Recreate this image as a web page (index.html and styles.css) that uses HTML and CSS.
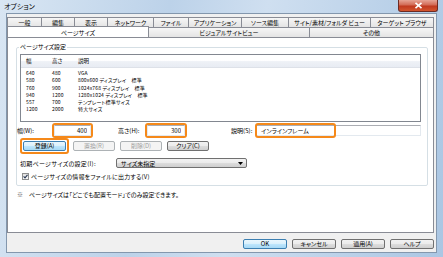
FILE: index.html
```html
<!DOCTYPE html>
<html lang="ja">
<head>
  <meta charset="UTF-8">
  <title>オプション</title>
  <link rel="stylesheet" href="styles.css">
</head>
<body>

<div class="window">
  <div class="titlebar">
    <span class="title">オプション</span>
    <span class="close-btn">
      <svg width="9" height="7" viewBox="0 0 9 7"><path d="M1.5 0.8 L7.5 6.2 M7.5 0.8 L1.5 6.2" stroke="#fff" stroke-width="1.6"/></svg>
    </span>
  </div>

  <div class="client">
    <div class="tab-row">
      <span class="tab tab-general">一般</span>
      <span class="tab tab-edit">編集</span>
      <span class="tab tab-view">表示</span>
      <span class="tab tab-network">ネットワーク</span>
      <span class="tab tab-file">ファイル</span>
      <span class="tab tab-app">アプリケーション</span>
      <span class="tab tab-source">ソース編集</span>
      <span class="tab tab-site">サイト/素材/フォルダ ビュー</span>
      <span class="tab tab-target">ターゲット ブラウザ</span>
    </div>
    <div class="tab-row">
      <span class="tab tab-active tab-pagesize">ページサイズ</span>
      <span class="tab tab-visual">ビジュアルサイトビュー</span>
      <span class="tab tab-other">その他</span>
    </div>

    <div class="panel">
      <fieldset class="group">
        <legend>ページサイズ設定</legend>

        <div class="listbox">
          <div class="list-head">
            <span>幅</span><span>高さ</span><span>説明</span>
          </div>
          <div class="list-row"><span>640</span><span>480</span><span>VGA</span></div>
          <div class="list-row"><span>580</span><span>600</span><span>800x600 ディスプレイ　標準</span></div>
          <div class="list-row"><span>760</span><span>900</span><span>1024x768 ディスプレイ　標準</span></div>
          <div class="list-row"><span>940</span><span>1200</span><span>1280x1024 ディスプレイ　標準</span></div>
          <div class="list-row"><span>557</span><span>700</span><span>テンプレート標準サイズ</span></div>
          <div class="list-row"><span>1200</span><span>2000</span><span>特大サイズ</span></div>
        </div>

        <div class="size-row">
          <label class="lbl-width" for="w">幅(<u>W</u>):</label>
          <span class="ring ring-width"><input class="textbox num" id="w" value="400"></span>
          <label class="lbl-height" for="h">高さ(<u>H</u>):</label>
          <span class="ring ring-height"><input class="textbox num" id="h" value="300"></span>
          <label class="lbl-desc" for="d">説明(<u>S</u>):</label>
          <span class="desc-wrap">
            <input class="textbox desc" id="d" value="インラインフレーム">
            <span class="ring-mark"></span>
          </span>
        </div>

        <div class="btn-row">
          <span class="ring ring-btn"><button class="btn btn-default">登録(<u>A</u>)</button></span>
          <button class="btn btn-disabled">置換(<u>R</u>)</button>
          <button class="btn btn-disabled">削除(<u>D</u>)</button>
          <button class="btn">クリア(<u>C</u>)</button>
        </div>

        <div class="select-row">
          <span class="select-label">初期ページサイズの設定(<u>I</u>):</span>
          <span class="select">
            <span>サイズ未指定</span>
            <svg width="5" height="3" viewBox="0 0 5 3"><path d="M0 0 H5 L2.5 3 Z" fill="#000"/></svg>
          </span>
        </div>

        <div class="check-row">
          <span class="checkbox">
            <svg width="5" height="5" viewBox="0 0 5 5"><path d="M0.6 2.4 L2 3.9 L4.5 0.8" stroke="#2b3a55" stroke-width="1.1" fill="none"/></svg>
          </span>
          <span>ページサイズの情報をファイルに出力する(<u>V</u>)</span>
        </div>
      </fieldset>

      <p class="note"><span class="mark">※</span>　ページサイズは「どこでも配置モード」でのみ設定できます。</p>
    </div>

    <div class="footer">
      <button class="btn btn-default">OK</button>
      <button class="btn">キャンセル</button>
      <button class="btn">適用(<u>A</u>)</button>
      <button class="btn">ヘルプ</button>
    </div>
  </div>
</div>

</body>
</html>
```

FILE: styles.css
```css
* {
  box-sizing: border-box;
}

body {
  margin: 0;
  font-family: "Noto Sans CJK JP", "Noto Sans", sans-serif;
  font-size: 6px;
  color: #000;
  font-feature-settings: "palt";
}

u {
  text-decoration: none;
}

.window {
  width: 443px;
  height: 257px;
  padding-bottom: 4px;
  background: linear-gradient(100deg, #d9e6f3 0%, #bcd2e9 35%, #cfdff0 55%, #aac6e3 100%);
}

.titlebar {
  display: flex;
  height: 13px;
  padding: 0 5px 0 4px;
}

.title {
  font-size: 7px;
  line-height: 13px;
}

.close-btn {
  display: flex;
  align-items: center;
  justify-content: center;
  margin-left: auto;
  width: 40px;
  height: 12px;
  border: 1px solid #6d2b23;
  border-top: none;
  border-radius: 0 0 3px 3px;
  background: linear-gradient(#e6a495 0%, #d26a55 45%, #c0391f 55%, #d2552f 100%);
}

.client {
  margin: 0 6px;
  height: 240px;
  padding: 3px 2px 3px 0;
  background: #f0f0f0;
  border: 1px solid #8397ad;
}

.tab-row {
  display: flex;
  height: 10px;
}

.tab {
  height: 10px;
  line-height: 9px;
  text-align: center;
  white-space: nowrap;
  border: 1px solid #898c95;
  border-bottom: none;
  margin-left: -1px;
  background: linear-gradient(#f6f6f6, #e4e4e4);
}

.tab:first-child {
  margin-left: 0;
}

.tab-general { width: 35px; }
.tab-edit { width: 34px; }
.tab-view { width: 34px; }
.tab-network { width: 47px; }
.tab-file { width: 36px; }
.tab-app { width: 54px; }
.tab-source { width: 48px; }
.tab-site { width: 83px; }
.tab-target { width: 64px; }
.tab-pagesize { width: 142px; }
.tab-visual { width: 162px; }
.tab-other { width: 125px; }

.tab-active {
  position: relative;
  z-index: 1;
  height: 11px;
  margin-top: -1px;
  line-height: 11px;
  background: #fff;
}

.panel {
  height: 196px;
  padding: 5px 5px 0 8px;
  background: #fff;
  border: 1px solid #898c95;
}

.group {
  margin: 0;
  padding: 0 6px 5px 3px;
  border: 1px solid #d5dfe5;
  border-radius: 2px;
}

.group legend {
  padding: 0 1px;
  margin-left: -1px;
  line-height: 8px;
}

.listbox {
  margin-top: 3px;
  height: 68px;
  border: 1px solid #828790;
  font-size: 5px;
}

.list-head,
.list-row {
  display: grid;
  grid-template-columns: 26px 26px 1fr;
  padding-left: 5px;
  white-space: nowrap;
}

.list-head {
  height: 13px;
  line-height: 12px;
  margin-bottom: 1px;
  font-size: 5.5px;
  background: linear-gradient(#fff 0%, #fff 45%, #eef1f6 55%, #e8ecf3 100%);
  border-bottom: 1px solid #dde1e8;
}

.list-row {
  height: 7.3px;
  line-height: 7.3px;
  letter-spacing: 0.15px;
}

.size-row {
  display: flex;
  align-items: center;
  height: 15px;
  margin: 1px 0 0 -3px;
}

.lbl-width { width: 35px; }
.lbl-height { width: 27px; margin-left: 25px; }
.lbl-desc { width: 25px; margin-left: 44px; }

.ring {
  display: inline-flex;
  border: 2px solid #f5891a;
  border-radius: 3px;
}

.ring-width { width: 41px; }
.ring-height { width: 42px; }

.textbox {
  width: 100%;
  height: 11px;
  padding: 0 3px;
  font: inherit;
  font-feature-settings: "palt";
  border: 1px solid #e3e9ef;
  border-top-color: #abadb3;
  background: #fff;
  outline: none;
}

.num {
  text-align: right;
}

.desc-wrap {
  position: relative;
  flex: 1;
  display: flex;
}

.desc {
  padding-left: 4px;
}

.ring-mark {
  position: absolute;
  left: -1px;
  top: -2px;
  width: 81px;
  height: 15px;
  border: 2px solid #f5891a;
  border-radius: 3px;
}

.btn-row {
  display: flex;
  align-items: center;
  gap: 5px;
  height: 15px;
}

.ring-btn {
  padding: 1px;
  margin-right: -1px;
}

.btn {
  width: 42px;
  height: 10px;
  padding: 0;
  font: inherit;
  font-feature-settings: "palt";
  line-height: 8px;
  color: #000;
  border: 1px solid #707070;
  border-radius: 2px;
  background: linear-gradient(#f2f2f2 0%, #ebebeb 50%, #dddddd 50%, #cfcfcf 100%);
}

.ring-btn .btn {
  width: 43px;
}

.btn-default {
  border-color: #3c7fb1;
  background: linear-gradient(#eaf6fd 0%, #d9f0fc 50%, #bee6fd 50%, #a7d9f5 100%);
}

.btn-disabled {
  color: #a0a0a0;
  border-color: #adb2b5;
  background: #f4f4f4;
}

.select-row {
  display: flex;
  align-items: center;
  height: 10px;
  margin-top: 5px;
}

.select-label {
  width: 96px;
  letter-spacing: 0.3px;
}

.select {
  display: flex;
  align-items: center;
  justify-content: space-between;
  width: 131px;
  height: 10px;
  padding: 0 3px 0 4px;
  border: 1px solid #707070;
  border-radius: 2px;
  background: linear-gradient(#f2f2f2 0%, #ebebeb 50%, #dddddd 50%, #cfcfcf 100%);
}

.check-row {
  display: flex;
  align-items: center;
  gap: 2px;
  height: 7px;
  margin: 5px 0 0 2px;
  letter-spacing: 0.2px;
}

.checkbox {
  display: flex;
  align-items: center;
  justify-content: center;
  width: 7px;
  height: 7px;
  border: 1px solid #8e8f8f;
  background: linear-gradient(#dedede, #fbfbfb);
}

.note {
  margin: 5px 0 0 1px;
  line-height: 8px;
}

.mark {
  color: #555;
}

.footer {
  display: flex;
  justify-content: flex-end;
  gap: 5px;
  margin-top: 6px;
}

.footer .btn {
  width: 44px;
}
```
